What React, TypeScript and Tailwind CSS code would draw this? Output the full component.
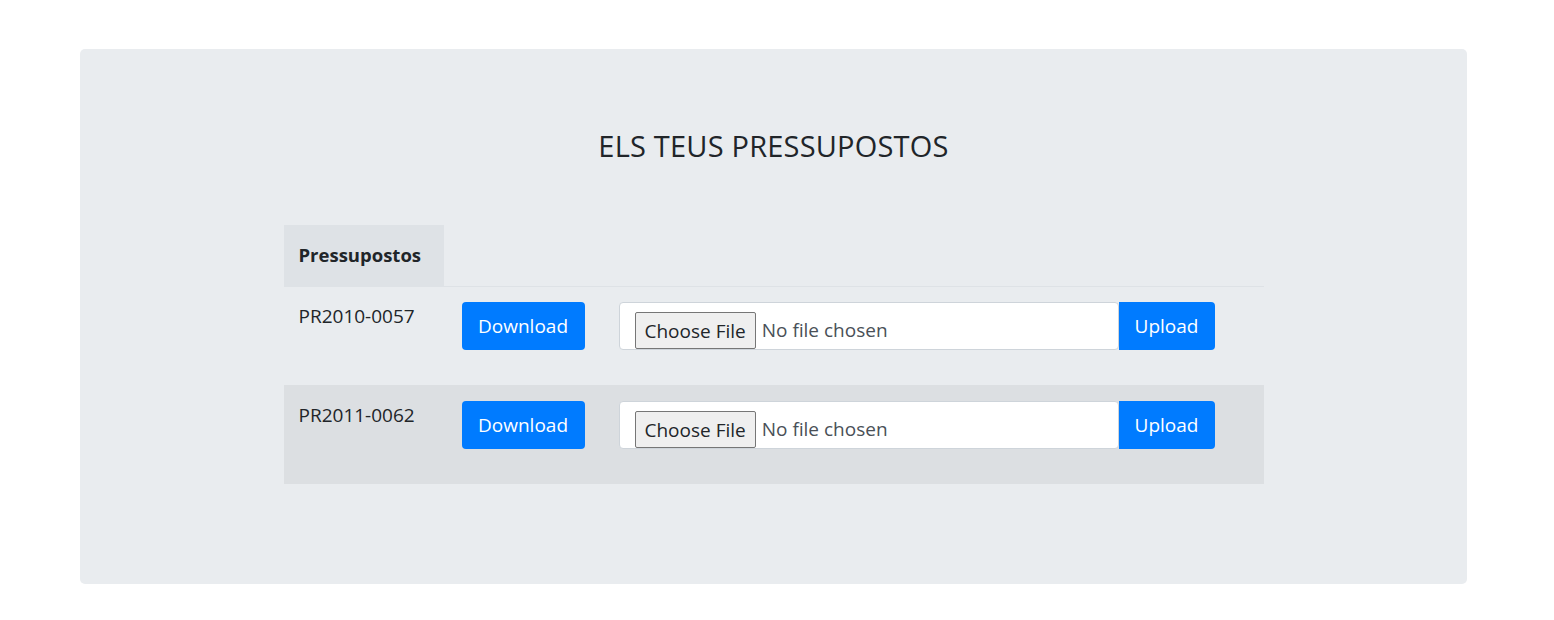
const budgets = [
  { id: "PR2010-0057", striped: false },
  { id: "PR2011-0062", striped: true },
];

function FileField() {
  return (
    <div className="flex items-stretch">
      <div className="flex h-[48px] w-[500px] items-start rounded-[4px] border border-[#ced4da] bg-white pl-[15px] pt-[9px]">
        <button className="h-[37px] rounded-[2px] border border-[#767676] bg-[#efefef] px-[9px] text-[19px] leading-[34px] text-[#212529]">
          Choose File
        </button>
        <span className="pl-[6px] text-[19px] leading-[37px] text-[#495057]">No file chosen</span>
      </div>
      <button className="h-[48px] w-[96px] rounded-r-[4px] bg-[#007bff] text-[19px] text-white">
        Upload
      </button>
    </div>
  );
}

export default function App() {
  return (
    <div className="min-h-[620px] bg-white pt-[49px] font-['Open_Sans','Noto_Sans',sans-serif] text-[#212529]">
      <div className="ml-[80px] flex h-[535px] w-[1387px] flex-col items-center rounded-[5px] bg-[#e9ecef] pt-[78px]">
        <h4 className="text-[29px] leading-[37px] font-medium tracking-[0.2px]">ELS TEUS PRESSUPOSTOS</h4>

        {/* Table */}
        <div className="mt-[61px] w-[980px]">
          <div className="flex border-b border-[#dee2e6]">
            <div className="h-[61px] w-[160px] bg-[#dee2e6] px-[15px] pt-[18px] text-[18.5px] leading-[24px] font-bold">
              Pressupostos
            </div>
          </div>

          {budgets.map((b) => (
            <div
              key={b.id}
              className={`flex items-start ${b.striped ? "h-[99px] bg-[#dcdfe2] pt-[16px]" : "h-[98px] pt-[15px]"}`}
            >
              <div className="w-[160px] px-[15px] text-[19px] leading-[28px]">{b.id}</div>
              <button className="ml-[18px] h-[48px] w-[123px] rounded-[4px] bg-[#007bff] text-[19px] text-white">
                Download
              </button>
              <div className="ml-[34px]">
                <FileField />
              </div>
            </div>
          ))}
        </div>
      </div>
    </div>
  );
}
